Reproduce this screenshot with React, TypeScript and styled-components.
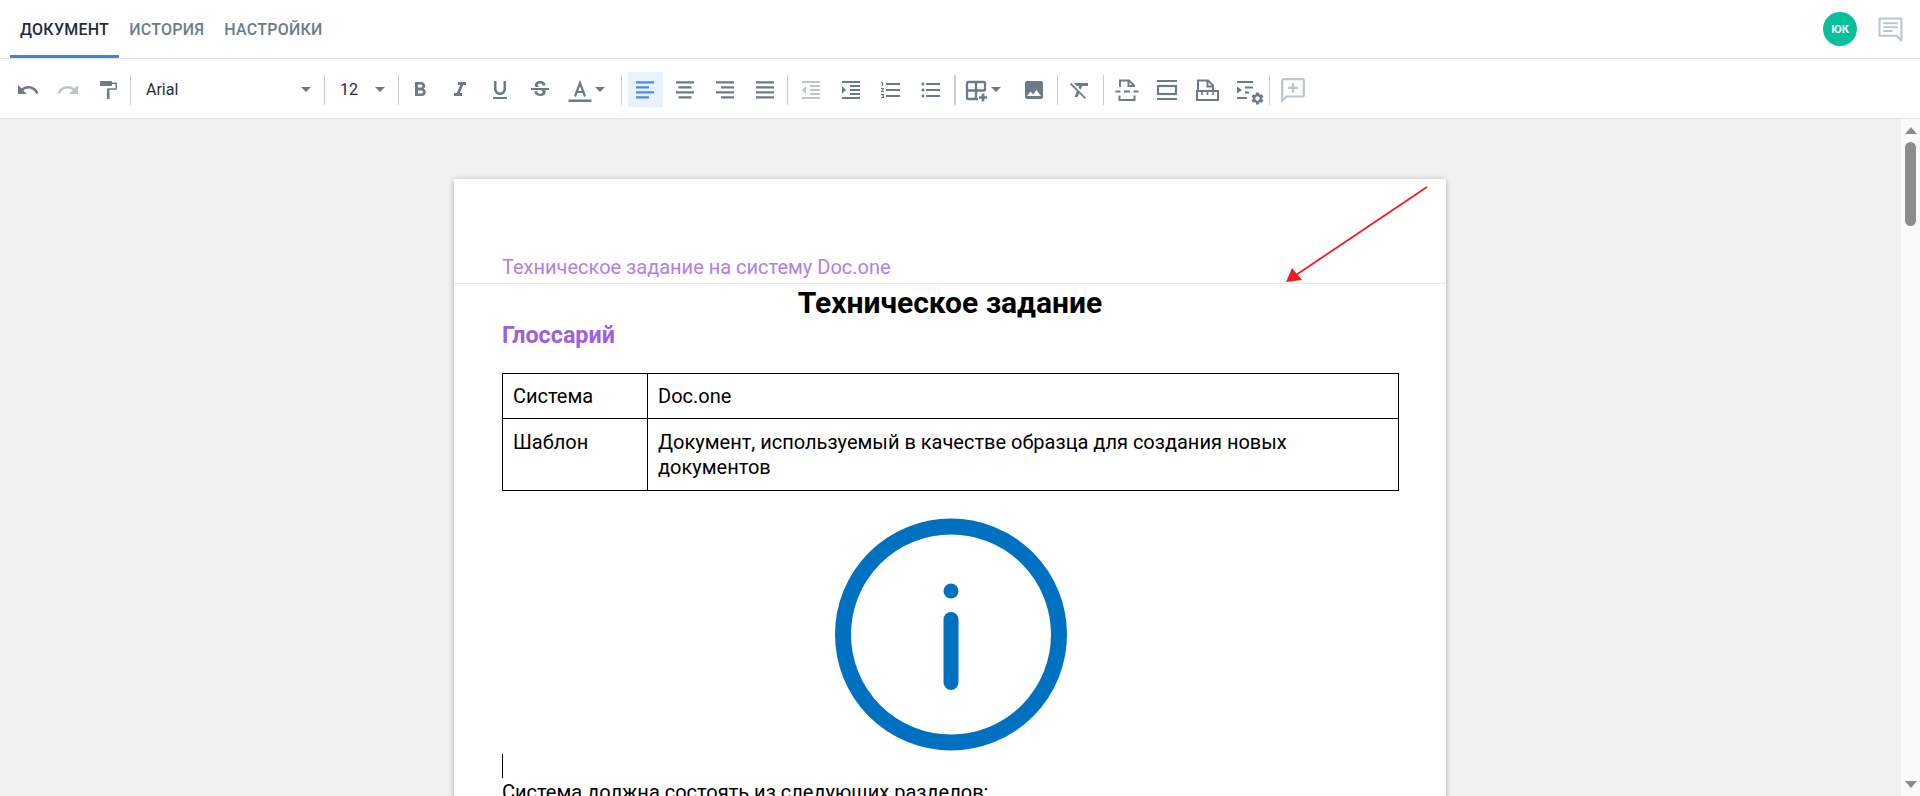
import React from "react";
import styled, { createGlobalStyle } from "styled-components";
import {
  MdUndo,
  MdRedo,
  MdFormatBold,
  MdFormatItalic,
  MdFormatUnderlined,
  MdStrikethroughS,
  MdFormatIndentDecrease,
  MdFormatIndentIncrease,
  MdFormatListNumbered,
  MdFormatListBulleted,
  MdFormatClear,
  MdImage,
  MdSettings,
} from "react-icons/md";

const ICON = "#6b7b8a";
const ICON_OFF = "#bcc5cc";

const GlobalStyle = createGlobalStyle`
  html, body {
    margin: 0;
    height: 100%;
    overflow: hidden;
    background: #fff;
    font-family: Roboto, "Liberation Sans", sans-serif;
  }
`;

const Shell = styled.div`
  display: flex;
  flex-direction: column;
  width: 1920px;
  height: 796px;
  overflow: hidden;
`;

const TabBar = styled.div`
  display: flex;
  align-items: stretch;
  justify-content: space-between;
  height: 58px;
  padding: 0 17px 0 10px;
  border-bottom: 1px solid #e3e3e3;
  flex-shrink: 0;
`;

const Tabs = styled.div`
  display: flex;
  align-items: stretch;
`;

const Tab = styled.div<{ $active?: boolean }>`
  display: flex;
  align-items: center;
  padding: 3px 10px 0;
  font-size: 16px;
  font-weight: 500;
  letter-spacing: 0.25px;
  color: ${(p) => (p.$active ? "#1f2d3a" : "#6b7c8c")};
  border-bottom: 3px solid ${(p) => (p.$active ? "#4285db" : "transparent")};
  box-sizing: border-box;
`;

const UserArea = styled.div`
  display: flex;
  align-items: center;
  gap: 21px;
`;

const Avatar = styled.div`
  display: flex;
  align-items: center;
  justify-content: center;
  width: 34px;
  height: 34px;
  border-radius: 50%;
  background: #08bf9b;
  color: #fff;
  font-size: 11px;
  font-weight: 700;
`;

const Toolbar = styled.div`
  display: flex;
  align-items: center;
  height: 60px;
  padding: 2px 0 0 8px;
  box-sizing: border-box;
  border-bottom: 1px solid #e3e3e3;
  flex-shrink: 0;
`;

const Separator = styled.div<{ $before?: number; $after?: number; $thick?: boolean }>`
  width: ${(p) => (p.$thick ? 2 : 1)}px;
  height: 30px;
  margin-left: ${(p) => p.$before ?? 0}px;
  margin-right: ${(p) => p.$after ?? 0}px;
  background: #c9cdd0;
  flex-shrink: 0;
`;

const ToolButton = styled.div<{ $active?: boolean; $off?: boolean }>`
  display: flex;
  align-items: center;
  justify-content: center;
  width: 35px;
  height: 35px;
  margin: 0 2.5px;
  flex-shrink: 0;
  color: ${(p) => (p.$active ? "#4a8ce0" : p.$off ? ICON_OFF : ICON)};
  background: ${(p) => (p.$active ? "#e9f1fb" : "transparent")};
  font-size: 24px;
`;

const CaretButton = styled.div<{ $width: number }>`
  display: flex;
  align-items: center;
  gap: 3px;
  width: ${(p) => p.$width}px;
  height: 35px;
  padding-left: 8px;
  box-sizing: border-box;
  color: ${ICON};
  font-size: 24px;
  flex-shrink: 0;
`;

const Caret = styled.span`
  width: 0;
  height: 0;
  border-left: 5px solid transparent;
  border-right: 5px solid transparent;
  border-top: 5px solid ${ICON};
`;

const Select = styled.div<{ $width: number; $inset: number }>`
  display: flex;
  align-items: center;
  justify-content: space-between;
  width: ${(p) => p.$width}px;
  height: 35px;
  padding: 0 13px 0 ${(p) => p.$inset}px;
  box-sizing: border-box;
  font-size: 16px;
  color: #1f2d3a;
  flex-shrink: 0;
`;

const Workspace = styled.div`
  display: flex;
  flex: 1;
  min-height: 0;
  background: #f1f1f1;
`;

const DocArea = styled.div`
  flex: 1;
  min-width: 0;
  overflow: hidden;
  padding: 60px 1px 0 0;
`;

const Scrollbar = styled.div`
  display: flex;
  flex-direction: column;
  align-items: center;
  justify-content: space-between;
  width: 19px;
  padding: 8px 0;
  box-sizing: border-box;
  background: #fafafa;
`;

const ScrollTop = styled.div`
  display: flex;
  flex-direction: column;
  align-items: center;
  gap: 8px;
`;

const ScrollArrow = styled.span<{ $down?: boolean }>`
  width: 0;
  height: 0;
  border-left: 6.5px solid transparent;
  border-right: 6.5px solid transparent;
  ${(p) => (p.$down ? "border-top" : "border-bottom")}: 7px solid #8c8c8c;
`;

const ScrollThumb = styled.div`
  width: 11px;
  height: 84px;
  border-radius: 6px;
  background: #8c8c8c;
`;

const Page = styled.div`
  position: relative;
  width: 992px;
  min-height: 900px;
  margin: 0 auto;
  background: #fff;
  box-shadow: 0 1px 6px rgba(0, 0, 0, 0.28);
  color: #000;
  font-size: 20px;
  line-height: 25px;
`;

const PageHeader = styled.div`
  display: flex;
  align-items: flex-end;
  height: 101px;
  padding: 0 48px 3px;
  border-bottom: 1px solid #e8e8e8;
  color: #b57ee5;
`;

const PageBody = styled.div`
  padding: 0 48px;
`;

const DocTitle = styled.h1`
  margin: 0;
  font-size: 30px;
  line-height: 37px;
  font-weight: 700;
  text-align: center;
`;

const Heading = styled.h2`
  margin: 0 0 24px;
  padding-top: 1px;
  font-size: 23.3px;
  line-height: 27px;
  font-weight: 700;
  color: #a05fdc;
`;

const GlossaryTable = styled.table`
  width: 897px;
  border-collapse: collapse;
  table-layout: fixed;
`;

const Cell = styled.td<{ $width?: number; $tall?: boolean }>`
  width: ${(p) => (p.$width ? `${p.$width}px` : "auto")};
  padding: ${(p) => (p.$tall ? "11px 10px 10px" : "10px 10px 9px")};
  border: 1px solid #000;
  box-sizing: border-box;
  vertical-align: top;
`;

const Figure = styled.div`
  display: flex;
  justify-content: center;
  padding: 27px 0 0 2px;
  height: 232px;
`;

const CaretLine = styled.div`
  width: 1px;
  height: 24px;
  margin: 4px 0 2px;
  background: #000;
`;

const ArrowMark = styled.svg`
  position: absolute;
  left: 820px;
  top: 0;
  width: 172px;
  height: 110px;
  pointer-events: none;
`;

const GearOverlay = styled.span`
  position: absolute;
  right: -6px;
  bottom: -4px;
  display: flex;
  font-size: 15px;
`;

const IconWithBadge = styled.span`
  position: relative;
  display: flex;
`;

// иконки, которых нет в material-наборе, рисуем сами
const Svg = ({ children, size = 24 }: { children: React.ReactNode; size?: number }) => (
  <svg width={size} height={size} viewBox="0 0 24 24" fill="none" stroke="currentColor" strokeWidth="2">
    {children}
  </svg>
);

const AlignIcon = ({ kind }: { kind: "left" | "center" | "right" | "justify" }) => {
  const shortLine =
    kind === "left" ? "M3 9.3h13M3 19.3h13" :
    kind === "center" ? "M5.5 9.3h13M5.5 19.3h13" :
    kind === "right" ? "M8 9.3h13M8 19.3h13" :
    "M3 9.3h18M3 19.3h18";
  return (
    <Svg>
      <path d={`M3 4.3h18M3 14.3h18${shortLine}`} strokeWidth="2.3" />
    </Svg>
  );
};

const RollerIcon = () => (
  <Svg>
    <rect x="4" y="3" width="12" height="5" rx="0.8" fill="currentColor" stroke="none" />
    <path d="M16 5.2h4.2v5.8H12.2v5" strokeWidth="1.5" />
    <path d="M12.2 11v10" strokeWidth="2.6" />
  </Svg>
);

const TextColorIcon = () => (
  <Svg>
    <path d="M7 18.5L12 5l5 13.5M8.8 14h6.4" strokeWidth="2.2" />
    <rect x="0.5" y="21.5" width="23" height="3" fill="currentColor" stroke="none" />
  </Svg>
);

const TablePlusIcon = () => (
  <Svg>
    <path d="M14 21H4a1 1 0 0 1-1-1V5a1 1 0 0 1 1-1h16a1 1 0 0 1 1 1v8M3 12.5h18M12 4v17" strokeWidth="2.3" />
    <path d="M19 15.5v8M15 19.5h8" strokeWidth="2.6" />
  </Svg>
);

const PageBreakIcon = () => (
  <Svg>
    <path d="M5 9V2.5h9l5 5V9" />
    <path d="M13.5 2.5v5.5H19" />
    <path d="M0.5 13.5h5M9 13.5h6M18.5 13.5h5" />
    <path d="M4.5 17.5v4.5h15v-4.5" />
  </Svg>
);

const HeaderFooterIcon = () => (
  <Svg>
    <path d="M2 3h20M2 21h20" strokeWidth="2.2" />
    <rect x="3" y="8" width="18" height="8" strokeWidth="2.2" />
  </Svg>
);

const PageRulerIcon = () => (
  <Svg>
    <path d="M3 13V2.5h10l5 5V13" />
    <path d="M12.5 2.5v6H18" />
    <rect x="2" y="13" width="21" height="9" />
    <path d="M7 13v4M12.5 13v4M18 13v4" strokeWidth="1.6" />
  </Svg>
);

const TemplateSettingsIcon = () => (
  <IconWithBadge>
    <Svg>
      <path d="M2 4h16M10 9.5h8M10 14.5h4M2 20h10" strokeWidth="2" />
      <path d="M2 8.5l5 3.5-5 3.5z" fill="currentColor" stroke="none" />
    </Svg>
    <GearOverlay>
      <MdSettings />
    </GearOverlay>
  </IconWithBadge>
);

const CommentPlusIcon = () => (
  <Svg size={26}>
    <path d="M2 22V3.5A1.5 1.5 0 0 1 3.5 2h17A1.5 1.5 0 0 1 22 3.5v13a1.5 1.5 0 0 1-1.5 1.5H6z" />
    <path d="M12 5.5v9M7.5 10h9" />
  </Svg>
);

const CommentsIcon = () => (
  <svg width="25" height="25" viewBox="0 0 24 24" fill="none" stroke={ICON_OFF}>
    <path d="M1.5 1.5h21v21l-4.5-4.5H1.5z" strokeWidth="2" strokeLinejoin="round" />
    <path d="M5 6h14M5 9.7h14M5 13.4h9" strokeWidth="1.8" />
  </svg>
);

const InfoFigure = () => (
  <svg width="232" height="233" viewBox="0 0 232 233">
    <circle cx="116" cy="116.5" r="108" fill="none" stroke="#0070c0" strokeWidth="16" />
    <circle cx="116" cy="73" r="7.5" fill="#0070c0" />
    <rect x="108.5" y="94" width="15" height="78" rx="7.5" fill="#0070c0" />
  </svg>
);

const App = () => {
  return (
    <>
      <GlobalStyle />
      <Shell>
        <TabBar>
          <Tabs>
            <Tab $active>ДОКУМЕНТ</Tab>
            <Tab>ИСТОРИЯ</Tab>
            <Tab>НАСТРОЙКИ</Tab>
          </Tabs>
          <UserArea>
            <Avatar>ЮК</Avatar>
            <CommentsIcon />
          </UserArea>
        </TabBar>

        <Toolbar>
          <ToolButton><MdUndo /></ToolButton>
          <ToolButton $off><MdRedo /></ToolButton>
          <ToolButton><RollerIcon /></ToolButton>
          <Separator $before={2} />
          <Select $width={193} $inset={15}>
            Arial
            <Caret />
          </Select>
          <Separator />
          <Select $width={73} $inset={15}>
            12
            <Caret />
          </Select>
          <Separator $after={1} />
          <ToolButton><MdFormatBold /></ToolButton>
          <ToolButton><MdFormatItalic /></ToolButton>
          <ToolButton><MdFormatUnderlined /></ToolButton>
          <ToolButton><MdStrikethroughS /></ToolButton>
          <CaretButton $width={60}>
            <TextColorIcon />
            <Caret />
          </CaretButton>
          <Separator $before={1} $after={3} />
          <ToolButton $active><AlignIcon kind="left" /></ToolButton>
          <ToolButton><AlignIcon kind="center" /></ToolButton>
          <ToolButton><AlignIcon kind="right" /></ToolButton>
          <ToolButton><AlignIcon kind="justify" /></ToolButton>
          <Separator $before={2} $after={3} />
          <ToolButton $off><MdFormatIndentDecrease /></ToolButton>
          <ToolButton><MdFormatIndentIncrease /></ToolButton>
          <ToolButton><MdFormatListNumbered /></ToolButton>
          <ToolButton><MdFormatListBulleted /></ToolButton>
          <Separator $before={3} $thick />
          <CaretButton $width={58}>
            <TablePlusIcon />
            <Caret />
          </CaretButton>
          <ToolButton><MdImage /></ToolButton>
          <Separator $before={3} $after={2} />
          <ToolButton><MdFormatClear /></ToolButton>
          <Separator $before={3} $after={3} />
          <ToolButton><PageBreakIcon /></ToolButton>
          <ToolButton><HeaderFooterIcon /></ToolButton>
          <ToolButton><PageRulerIcon /></ToolButton>
          <ToolButton><TemplateSettingsIcon /></ToolButton>
          <Separator $before={2} $after={3} />
          <ToolButton $off><CommentPlusIcon /></ToolButton>
        </Toolbar>

        <Workspace>
          <DocArea>
            <Page>
              <PageHeader>Техническое задание на систему Doc.one</PageHeader>
              <PageBody>
                <DocTitle>Техническое задание</DocTitle>
                <Heading>Глоссарий</Heading>
                <GlossaryTable>
                  <tbody>
                    <tr>
                      <Cell $width={145}>Система</Cell>
                      <Cell>Doc.one</Cell>
                    </tr>
                    <tr>
                      <Cell $width={145} $tall>Шаблон</Cell>
                      <Cell $tall>Документ, используемый в качестве образца для создания новых документов</Cell>
                    </tr>
                  </tbody>
                </GlossaryTable>
                <Figure>
                  <InfoFigure />
                </Figure>
                <CaretLine />
                <div>Система должна состоять из следующих разделов:</div>
              </PageBody>
              <ArrowMark viewBox="0 0 172 110">
                <path d="M153 8L22 96" stroke="#ee1c25" strokeWidth="1.8" fill="none" />
                <path d="M12 103L18 89L28 101Z" fill="#ee1c25" />
              </ArrowMark>
            </Page>
          </DocArea>
          <Scrollbar>
            <ScrollTop>
              <ScrollArrow />
              <ScrollThumb />
            </ScrollTop>
            <ScrollArrow $down />
          </Scrollbar>
        </Workspace>
      </Shell>
    </>
  );
};

export default App;
